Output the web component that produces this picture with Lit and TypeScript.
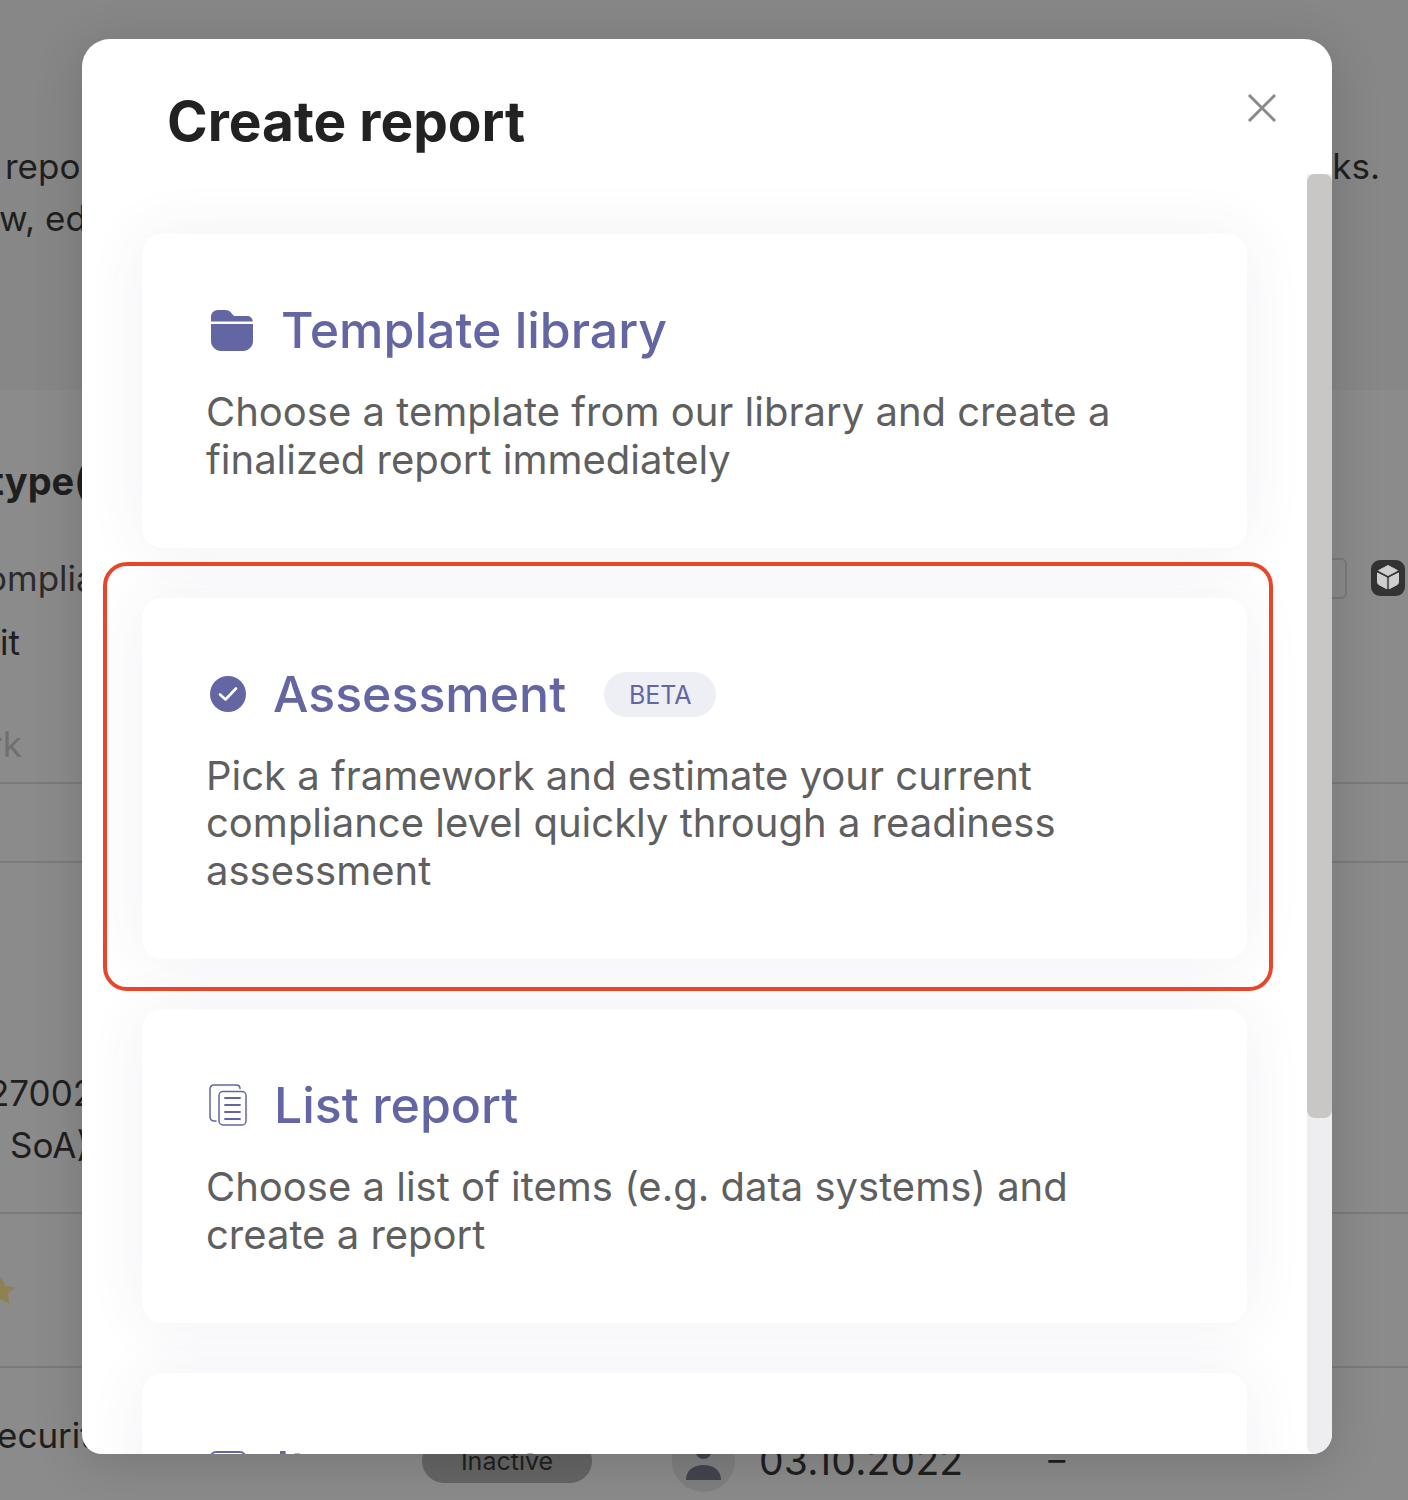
import { LitElement, html, css } from "lit";
import { customElement } from "lit/decorators.js";

const folderIcon = html`<svg class="ic-folder" viewBox="0 0 42 41" aria-hidden="true"><path fill="#6366a3" d="M0 7C0 3 3 0 7 0h7c3 0 5 1.200 6.500 3.200L23 6h13c3 0 5.500 1.900 5.800 5.500H0z"/><path fill="#6366a3" d="M0 14h42v17c0 5.500-4.500 10-10 10H10C4.500 41 0 36.500 0 31z"/></svg>`;
const checkIcon = html`<svg class="ic-check" viewBox="0 0 36 36" aria-hidden="true"><circle cx="18" cy="18" r="18" fill="#6366a3"/><path d="M10 18.500l5.500 5 10.500-11" fill="none" stroke="#fff" stroke-width="2.600" stroke-linecap="round" stroke-linejoin="round"/></svg>`;
const docsIcon = html`<svg class="ic-docs" viewBox="0 0 38 42" aria-hidden="true"><g fill="none" stroke="#6366a3" stroke-width="1.500" stroke-linecap="round"><path d="M7 37H5c-2.300 0-4-1.700-4-4V5c0-2.300 1.700-4 4-4h22c2.300 0 4 1.500 4 3.500"/><rect x="10" y="7.500" width="27" height="33.500" rx="4" fill="#fff"/><path d="M16 14h15M16 21h15M16 28h15M16 35h15" stroke-width="1.800"/></g></svg>`;
const listIcon = html`<svg class="ic-item" viewBox="0 0 36 36" aria-hidden="true"><rect x="1" y="1" width="34" height="34" rx="5" fill="none" stroke="#6366a3" stroke-width="2"/></svg>`;
const cubeIcon = html`<svg class="cube" viewBox="0 0 34 36" aria-hidden="true"><g fill="#cfcfcf" stroke="#cfcfcf" stroke-width="1" stroke-linejoin="round"><path d="M17 5.500l9.500 5L17 15.500l-9.500-5z"/><path d="M6.500 13l9.300 4.800v11L8.500 25c-1.300-.7-2-1.700-2-3z"/><path d="M27.500 13l-9.300 4.800v11l7.300-3.800c1.300-.7 2-1.700 2-3z"/></g></svg>`;

@customElement("app-root")
export class AppRoot extends LitElement {
  static styles = css`
    :host { display: block; position: relative; width: 1408px; height: 1500px; overflow: hidden; background: #8b8b8b; font-family: Inter, "Liberation Sans", sans-serif; color: #1f1f1f; }
    .page { width: 1408px; height: 1500px; overflow: hidden; font-size: 35px; }
    .hero { height: 390px; box-sizing: border-box; padding-top: 140px; background: #878787; }
    .hero-line { display: flex; justify-content: space-between; height: 52px; line-height: 52px; }
    .frag-repo { margin-left: 5px; }
    .frag-ed { margin-left: -1px; }
    .frag-ks { margin-left: auto; margin-right: 28px; }
    .types { height: 394px; box-sizing: border-box; padding-top: 65px; border-bottom: 2px solid #7b7b7b; }
    .type-head { font-size: 38px; font-weight: 700; line-height: 52px; margin-left: -10px; }
    .type-row { display: flex; justify-content: space-between; align-items: center; height: 40px; margin-top: 51px; color: #2b2b2b; }
    .type-it { height: 40px; line-height: 40px; margin-top: 24px; }
    .type-rk { height: 40px; line-height: 40px; margin-top: 62px; color: #707070; margin-left: -11px; }
    .omp { margin-left: -14px; }
    .ctrls { display: flex; align-items: center; gap: 24px; margin-right: 3px; }
    .box { width: 40px; height: 37px; border: 2px solid #7a7a7a; border-radius: 6px; }
    .cube-wrap { width: 34px; height: 36px; border-radius: 9px; background: #333; display: block; }
    .cube { display: block; width: 34px; height: 36px; }
    .band { height: 79px; box-sizing: border-box; border-bottom: 2px solid #7b7b7b; }
    .iso { height: 351px; box-sizing: border-box; padding-top: 204px; border-bottom: 2px solid #7b7b7b; line-height: 52px; }
    .iso-a { margin-left: -12px; }
    .iso-b { margin-left: 10px; }
    .star-row { height: 154px; box-sizing: border-box; padding-top: 61px; border-bottom: 2px solid #7b7b7b; }
    .star { display: block; width: 32px; height: 32px; margin-left: -15px; }
    .last { display: flex; align-items: flex-start; height: 132px; }
    .last-name { width: 422px; flex: none; margin-top: 45px; line-height: 44px; text-indent: -3px; }
    .pill { width: 170px; height: 44px; margin-top: 71px; border-radius: 22px; background: #656565; display: flex; align-items: center; justify-content: center; font-size: 25px; flex: none; }
    .avatar { width: 63px; height: 63px; margin-top: 61px; margin-left: 80px; border-radius: 50%; background: #7f7f7f; flex: none; }
    .avatar svg { display: block; width: 63px; height: 63px; }
    .date { margin-left: 24px; margin-top: 71px; font-size: 39px; letter-spacing: .2px; line-height: 44px; flex: none; }
    .dash { margin-left: 85px; margin-top: 70px; line-height: 44px; font-size: 34px; flex: none; }

    .modal { position: absolute; left: 82px; top: 39px; width: 1250px; height: 1415px; background: #fff; border-radius: 28px 28px 20px 20px; overflow: hidden; display: flex; flex-direction: column; }
    .modal-shadow { position: absolute; left: 82px; top: 39px; width: 1250px; height: 1415px; border-radius: 28px 28px 20px 20px; box-shadow: 0 8px 50px rgba(0,0,0,.16); }
    .head { flex: none; height: 135px; display: flex; justify-content: space-between; align-items: flex-start; box-sizing: border-box; padding: 47px 54px 0 85px; }
    h1 { margin: 0; font-size: 55px; line-height: 70px; font-weight: 700; color: #222; }
    .close { display: block; width: 32px; height: 32px; margin-top: 6px; }
    .body { flex: 1; min-height: 0; display: flex; }
    .main { flex: 1; min-width: 0; overflow: hidden; box-sizing: border-box; padding: 60px 60px 0 60px; display: flex; flex-direction: column; gap: 50px; }
    .card { flex: none; background: #fff; border-radius: 20px; box-sizing: border-box; padding: 64px 65px 64.200px 64px; box-shadow: 0 0 60px rgba(70,70,120,.075); }
    .title { display: flex; align-items: center; height: 64px; margin-bottom: 26px; font-size: 50px; font-weight: 550; color: #6366a3; }
    .title span.t { line-height: 64px; }
    .ic-folder { width: 42px; height: 41px; margin-left: 5px; margin-right: 28px; flex: none; }
    .ic-check { width: 36px; height: 36px; margin-left: 4px; margin-right: 27px; flex: none; }
    .ic-docs { width: 38px; height: 42px; margin-left: 3px; margin-right: 27px; flex: none; }
    .ic-item { width: 36px; height: 36px; margin-left: 4px; margin-right: 30px; flex: none; }
    .badge { margin-left: 38px; margin-top: 2px; height: 45px; width: 112px; border-radius: 23px; background: #eeeef5; font-size: 25px; font-weight: 400; display: flex; align-items: center; justify-content: center; color: #6366a3; }
    p { margin: 0; font-size: 40px; line-height: 47.750px; color: #5f5f5f; }
    .track { flex: none; width: 25px; background: #eeeef0; border-radius: 0 0 8px 8px; }
    .thumb { height: 944px; background: #c8c7c5; border-radius: 8px; }
    .annot { position: absolute; left: 21px; top: 523px; width: 1170px; height: 429px; box-sizing: border-box; border: 4px solid #e8452a; border-radius: 24px; pointer-events: none; }
  `;

  render() {
    return html`
      <div class="page">
        <section class="hero">
          <div class="hero-line"><span class="frag-repo">repo</span><span class="frag-ks">ks.</span></div>
          <div class="hero-line"><span class="frag-ed">w, ed</span></div>
        </section>
        <section class="types">
          <div class="type-head">type(</div>
          <div class="type-row"><span class="omp">omplia</span><span class="ctrls"><span class="box"></span><span class="cube-wrap">${cubeIcon}</span></span></div>
          <div class="type-it">it</div>
          <div class="type-rk">rk</div>
        </section>
        <div class="band"></div>
        <section class="iso">
          <div class="iso-a">27002</div>
          <div class="iso-b">SoA)</div>
        </section>
        <section class="star-row">
          <svg class="star" viewBox="0 0 24 24" aria-hidden="true"><path fill="#8f8152" d="M12 1.500l3.200 6.800 7.300.9-5.400 5.100 1.400 7.300L12 18l-6.500 3.600 1.400-7.300L1.500 9.200l7.300-.9z"/></svg>
        </section>
        <section class="last">
          <div class="last-name">ecurit</div>
          <div class="pill">Inactive</div>
          <div class="avatar"><svg viewBox="0 0 63 63" aria-hidden="true"><circle cx="31.500" cy="22" r="8" fill="#42454f"/><path fill="#42454f" d="M14 51c0-10 8-15 17.500-15S49 41 49 51z"/></svg></div>
          <div class="date">03.10.2022</div>
          <div class="dash">–</div>
        </section>
      </div>

      <div class="modal-shadow"></div>
      <div class="modal">
        <div class="head">
          <h1>Create report</h1>
          <svg class="close" viewBox="0 0 32 32" aria-hidden="true"><path d="M3 3l26 26M29 3L3 29" stroke="#8a8a8a" stroke-width="3" fill="none"/></svg>
        </div>
        <div class="body">
          <div class="main">
            <div class="card">
              <div class="title">${folderIcon}<span class="t">Template library</span></div>
              <p>Choose a template from our library and create a finalized report immediately</p>
            </div>
            <div class="card">
              <div class="title">${checkIcon}<span class="t">Assessment</span><span class="badge">BETA</span></div>
              <p>Pick a framework and estimate your current compliance level quickly through a readiness assessment</p>
            </div>
            <div class="card">
              <div class="title">${docsIcon}<span class="t">List report</span></div>
              <p>Choose a list of items (e.g. data systems) and create a report</p>
            </div>
            <div class="card">
              <div class="title">${listIcon}<span class="t">Item report</span></div>
              <p>Choose a single item and create a report</p>
            </div>
          </div>
          <div class="track"><div class="thumb"></div></div>
        </div>
        <div class="annot"></div>
      </div>
    `;
  }
}
